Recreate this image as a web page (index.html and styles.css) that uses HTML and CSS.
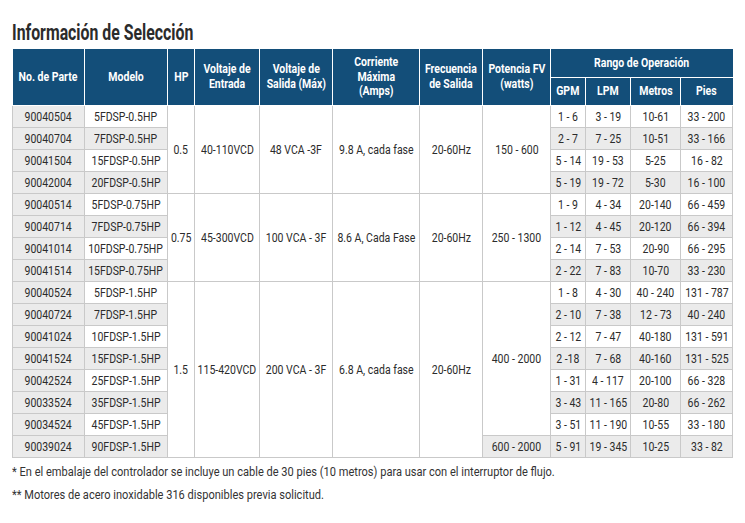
FILE: index.html
```html
<!DOCTYPE html>
<html lang="es">
<head>
<meta charset="utf-8">
<title>Información de Selección</title>
<link rel="stylesheet" href="styles.css">
</head>
<body>
<div class="page">
  <h1 class="title"><span>Información de Selección</span></h1>
  <table class="spec">
    <colgroup>
      <col class="c-parte"><col class="c-modelo"><col class="c-hp"><col class="c-ve"><col class="c-vs"><col class="c-corr"><col class="c-frec"><col class="c-pot"><col class="c-gpm"><col class="c-lpm"><col class="c-met"><col class="c-pies">
    </colgroup>
    <thead>
      <tr class="h1row">
        <th rowspan="2"><span>No. de Parte</span></th>
        <th rowspan="2"><span>Modelo</span></th>
        <th rowspan="2"><span>HP</span></th>
        <th rowspan="2"><span>Voltaje de<br>Entrada</span></th>
        <th rowspan="2"><span>Voltaje de<br>Salida (Máx)</span></th>
        <th rowspan="2"><span>Corriente<br>Máxima<br>(Amps)</span></th>
        <th rowspan="2"><span>Frecuencia<br>de Salida</span></th>
        <th rowspan="2"><span>Potencia FV<br>(watts)</span></th>
        <th colspan="4"><span>Rango de Operación</span></th>
      </tr>
      <tr class="h2row">
        <th><span>GPM</span></th><th><span>LPM</span></th><th><span>Metros</span></th><th><span>Pies</span></th>
      </tr>
    </thead>
    <tbody>
      <tr>
        <td class="g"><span>90040504</span></td><td><span>5FDSP-0.5HP</span></td>
        <td rowspan="4"><span>0.5</span></td><td rowspan="4"><span>40-110VCD</span></td><td rowspan="4"><span>48 VCA -3F</span></td><td rowspan="4"><span>9.8 A, cada fase</span></td><td rowspan="4"><span>20-60Hz</span></td><td rowspan="4"><span>150 - 600</span></td>
        <td><span>1 - 6</span></td><td><span>3 - 19</span></td><td><span>10-61</span></td><td><span>33 - 200</span></td>
      </tr>
      <tr class="alt"><td class="g"><span>90040704</span></td><td><span>7FDSP-0.5HP</span></td><td><span>2 - 7</span></td><td><span>7 - 25</span></td><td><span>10-51</span></td><td><span>33 - 166</span></td></tr>
      <tr><td class="g"><span>90041504</span></td><td><span>15FDSP-0.5HP</span></td><td><span>5 - 14</span></td><td><span>19 - 53</span></td><td><span>5-25</span></td><td><span>16 - 82</span></td></tr>
      <tr class="alt"><td class="g"><span>90042004</span></td><td><span>20FDSP-0.5HP</span></td><td><span>5 - 19</span></td><td><span>19 - 72</span></td><td><span>5-30</span></td><td><span>16 - 100</span></td></tr>
      <tr>
        <td class="g"><span>90040514</span></td><td><span>5FDSP-0.75HP</span></td>
        <td rowspan="4"><span>0.75</span></td><td rowspan="4"><span>45-300VCD</span></td><td rowspan="4"><span>100 VCA - 3F</span></td><td rowspan="4"><span>8.6 A, Cada Fase</span></td><td rowspan="4"><span>20-60Hz</span></td><td rowspan="4"><span>250 - 1300</span></td>
        <td><span>1 - 9</span></td><td><span>4 - 34</span></td><td><span>20-140</span></td><td><span>66 - 459</span></td>
      </tr>
      <tr class="alt"><td class="g"><span>90040714</span></td><td><span>7FDSP-0.75HP</span></td><td><span>1 - 12</span></td><td><span>4 - 45</span></td><td><span>20-120</span></td><td><span>66 - 394</span></td></tr>
      <tr><td class="g"><span>90041014</span></td><td><span>10FDSP-0.75HP</span></td><td><span>2 - 14</span></td><td><span>7 - 53</span></td><td><span>20-90</span></td><td><span>66 - 295</span></td></tr>
      <tr class="alt"><td class="g"><span>90041514</span></td><td><span>15FDSP-0.75HP</span></td><td><span>2 - 22</span></td><td><span>7 - 83</span></td><td><span>10-70</span></td><td><span>33 - 230</span></td></tr>
      <tr>
        <td class="g"><span>90040524</span></td><td><span>5FDSP-1.5HP</span></td>
        <td rowspan="8"><span>1.5</span></td><td rowspan="8"><span>115-420VCD</span></td><td rowspan="8"><span>200 VCA - 3F</span></td><td rowspan="8"><span>6.8 A, cada fase</span></td><td rowspan="8"><span>20-60Hz</span></td><td rowspan="7"><span>400 - 2000</span></td>
        <td><span>1 - 8</span></td><td><span>4 - 30</span></td><td><span>40 - 240</span></td><td><span>131 - 787</span></td>
      </tr>
      <tr class="alt"><td class="g"><span>90040724</span></td><td><span>7FDSP-1.5HP</span></td><td><span>2 - 10</span></td><td><span>7 - 38</span></td><td><span>12 - 73</span></td><td><span>40 - 240</span></td></tr>
      <tr><td class="g"><span>90041024</span></td><td><span>10FDSP-1.5HP</span></td><td><span>2 - 12</span></td><td><span>7 - 47</span></td><td><span>40-180</span></td><td><span>131 - 591</span></td></tr>
      <tr class="alt"><td class="g"><span>90041524</span></td><td><span>15FDSP-1.5HP</span></td><td><span>2 -18</span></td><td><span>7 - 68</span></td><td><span>40-160</span></td><td><span>131 - 525</span></td></tr>
      <tr><td class="g"><span>90042524</span></td><td><span>25FDSP-1.5HP</span></td><td><span>1 - 31</span></td><td><span>4 - 117</span></td><td><span>20-100</span></td><td><span>66 - 328</span></td></tr>
      <tr class="alt"><td class="g"><span>90033524</span></td><td><span>35FDSP-1.5HP</span></td><td><span>3 - 43</span></td><td><span>11 - 165</span></td><td><span>20-80</span></td><td><span>66 - 262</span></td></tr>
      <tr><td class="g"><span>90034524</span></td><td><span>45FDSP-1.5HP</span></td><td><span>3 - 51</span></td><td><span>11 - 190</span></td><td><span>10-55</span></td><td><span>33 - 180</span></td></tr>
      <tr class="alt"><td class="g"><span>90039024</span></td><td><span>90FDSP-1.5HP</span></td><td><span>600 - 2000</span></td><td><span>5 - 91</span></td><td><span>19 - 345</span></td><td><span>10-25</span></td><td><span>33 - 82</span></td></tr>
    </tbody>
  </table>
  <p class="note"><span>* En el embalaje del controlador se incluye un cable de 30 pies (10 metros) para usar con el interruptor de flujo.</span></p>
  <p class="note"><span>** Motores de acero inoxidable 316 disponibles previa solicitud.</span></p>
</div>
</body>
</html>
```

FILE: styles.css
```css
html, body {
  margin: 0;
  padding: 0;
  background: #ffffff;
}

.page {
  padding: 0 0 0 12px;
  font-family: Roboto, "Liberation Sans", Arial, sans-serif;
  color: #2b2b2b;
}

.title {
  margin: 0 0 3px 0;
  padding-top: 20px;
  font-size: 22px;
  line-height: 26px;
  font-weight: bold;
  color: #2b2b2b;
  white-space: nowrap;
}

.title span {
  display: inline-block;
  transform: scaleX(0.72);
  transform-origin: left center;
}

.spec {
  width: 720px;
  table-layout: fixed;
  border-collapse: collapse;
  font-size: 12.5px;
}

.c-parte { width: 72px; }
.c-modelo { width: 83px; }
.c-hp { width: 27px; }
.c-ve { width: 65px; }
.c-vs { width: 73px; }
.c-corr { width: 87px; }
.c-frec { width: 63px; }
.c-pot { width: 68px; }
.c-gpm { width: 35px; }
.c-lpm { width: 45px; }
.c-met { width: 50px; }
.c-pies { width: 52px; }

.spec th > span,
.spec td > span {
  display: inline-block;
  margin: 0 -40px;
  transform: scaleX(0.84);
  white-space: nowrap;
}

.spec th {
  background: #134e79;
  color: #ffffff;
  font-weight: bold;
  font-size: 12.5px;
  line-height: 14.5px;
  border: 1px solid #ffffff;
  padding: 0;
  text-align: center;
  vertical-align: middle;
}

.spec thead tr:first-child th {
  border-top: none;
}

.spec thead th:first-child {
  border-left: none;
}

.spec thead th:last-child {
  border-right: none;
}

.h1row { height: 28px; }
.h2row { height: 28px; }

.spec td {
  border: 1px solid #c9c9c9;
  padding: 0;
  height: 21px;
  text-align: center;
  vertical-align: middle;
  white-space: nowrap;
  color: #2b2b2b;
  background: #ffffff;
}

.spec tr.alt td {
  background: #ebebeb;
}

.spec tr.alt td[rowspan] {
  background: #ffffff;
}

.spec td.g {
  background: #ebebeb;
}

.note {
  margin: 2px 0 0 0;
  font-size: 12.5px;
  line-height: 23px;
  color: #333333;
  white-space: nowrap;
}

.note span {
  display: inline-block;
  transform: scaleX(0.885);
  transform-origin: left center;
}

.note + .note {
  margin-top: 0;
}
```
